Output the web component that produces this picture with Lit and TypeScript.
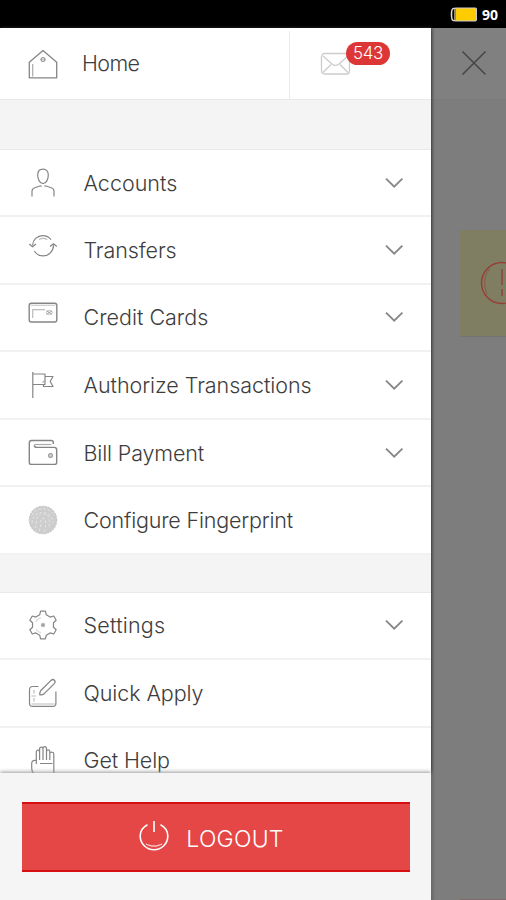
import { LitElement, html, css, svg } from "lit";
import { customElement } from "lit/decorators.js";
import { classMap } from "lit/directives/class-map.js";
import { styleMap } from "lit/directives/style-map.js";

// Outline of a six-toothed cog: each tooth is a flat tip between two inner corners.
const cog = (() => {
  const points: string[] = [];
  const at = (deg: number, r: number) => {
    const a = ((deg - 90) * Math.PI) / 180;
    points.push(`${(15 + r * Math.cos(a)).toFixed(2)} ${(15 + r * Math.sin(a)).toFixed(2)}`);
  };
  for (let tooth = 0; tooth < 6; tooth++) {
    const c = tooth * 60;
    at(c - 18, 10.7);
    at(c - 10, 14);
    at(c + 10, 14);
    at(c + 18, 10.7);
  }
  return `M${points.join("L")}Z`;
})();

const icons = {
  home: svg`<path d="M1.3 13.2 15 1.5 28.7 13.2V28.8H1.3Z" stroke-width="1.3"/><path d="M4.7 15v12.5" stroke="#aaa"/><circle cx="15" cy="10.5" r="1.9" stroke="#999"/><path d="M12 10.5h6" stroke="#aaa" stroke-width=".7"/>`,
  user: svg`<path d="M15 1.200c-3.600 0-5.300 2.300-5.300 5.800 0 4.300 2 8.600 5.300 8.600s5.300-4.300 5.300-8.600c0-3.500-1.700-5.800-5.300-5.800Z"/><path d="M4 28.500v-5.300c0-2 .9-2.900 2.800-3.500l5.700-1.900M26 28.500v-5.300c0-2-.9-2.900-2.800-3.500l-5.700-1.900M12.500 17.800l1 .7M17.500 17.800l-1 .7"/>`,
  transfer: svg`<path d="M4.500 14.500C4.800 8.700 9.200 4.600 14.800 4.600c3.500 0 6.300 1.500 8.200 4M6.300 20c2 3.200 5 4.900 8.700 4.900 5.800 0 10.300-4.500 10.500-10.700"/><path d="m1.300 13 3.200 2.800L8 13M22 15.500l3.500-2.700 3.300 2.700"/><path d="M11 8.500c2.700-1.400 6-1.300 8.200.2" stroke="#bbb"/>`,
  card: svg`<rect x="1.200" y="5.300" width="27.600" height="18.700" rx="2.200" stroke-width="1.400"/><path d="M3 7.300h24" stroke="#ccc"/><path d="M4.700 20v-8.300H17" stroke="#bbb"/><path d="m18.500 12.800 5.500 3.500m0-3.500-5.500 3.500" stroke="#999" stroke-width=".9"/><ellipse cx="21.300" cy="14.500" rx="3" ry="1.900" stroke="#aaa" stroke-width=".8"/>`,
  flag: svg`<path d="M4.800 2v26"/><path d="M4.800 4h12.200v10.500H4.800M17 6.500h8l-2.800 5 2.800 5h-9.500v-2"/><path d="M17 10.500l-2.500 2" stroke="#aaa"/>`,
  wallet: svg`<path d="M25.300 6V4.500c0-1.400-.8-2-2-2H3.500c-1.500 0-2.200.9-2.200 2.200v19.500c0 1.400.9 2.200 2.200 2.200h23c1.400 0 2.200-.8 2.200-2.200V12c0-1.700-1-2.600-2.600-2.600H8.500c-1.500 0-2.200-.8-2.200-2.100" stroke-width="1.400"/><path d="M6.300 6.500h17" stroke="#aaa"/><circle cx="22.500" cy="17.500" r="1.900" fill="#ddd" stroke="#999"/>`,
  finger: svg`<circle cx="15" cy="15" r="13.700" fill="#cdcdcd" stroke="#c8c8c8" stroke-dasharray="2 1"/><g stroke="#e8e8e8" stroke-width=".9" stroke-dasharray="2.500 2"><path d="M4 10C8 1.500 22 2 26 10M4 18C4 5 24 3 25 18M7 23c3-5-1-14 8-14 7 0 7 7 6 14M11 26c4-7 0-13 4-13s3 9 1 14"/></g>`,
  gear: svg`<path d=${cog}/><circle cx="15" cy="15" r="1.700" fill="#999" stroke="#bbb"/><path d="M8 12C9 9.500 11 8.200 13 7.700M8 19c1 2 3 3.500 5 3.900" stroke="#ddd"/>`,
  apply: svg`<path d="M10.500 8.500H4.700c-2.200 0-3.200 1.100-3.200 3.200v13.500c0 2.200 1 3.200 3.200 3.200h20c2.200 0 3.200-1 3.200-3.200V13.500"/><path d="m11.800 15.300c.2-1.300.5-2.200 1.300-3L23 2.400c2.500-2.200 5.400.8 3.300 3.200L16.500 15.400c-1.200 1.100-2.500 1.400-4.200 1.500-.5 0-.6-.5-.5-1.600Z" stroke-width="1.300"/><path d="M6 12v3.500M6 20v3.500M3.500 18h4.500M3.500 26h23" stroke="#bbb"/>`,
  hand: svg`<path d="M8.300 19V7.200c0-2.700 3.300-2.700 3.300 0V15M11.600 7V4.200c0-2.700 3.400-2.700 3.400 0V15M15 5.500V3.700c0-2.700 3.500-2.700 3.500 0V15M18.500 6.500c0-2.300 3.300-2.300 3.300 0V15M21.800 8.500c0-1.700 4-2 4 .5V30M8.300 15.500c-3.500-.5-4.600 1-4.600 3.200V23c0 3.500 1.600 5.800 4.400 8M12 18.500h12.500"/>`,
};
type IconName = keyof typeof icons;
interface Item { label: string; icon: IconName; expands: boolean; tracking: number; }

const banking: Item[] = [
  { label: "Accounts", icon: "user", expands: true, tracking: 0 },
  { label: "Transfers", icon: "transfer", expands: true, tracking: -0.1 },
  { label: "Credit Cards", icon: "card", expands: true, tracking: 0 },
  { label: "Authorize Transactions", icon: "flag", expands: true, tracking: -0.05 },
  { label: "Bill Payment", icon: "wallet", expands: true, tracking: -0.14 },
  { label: "Configure Fingerprint", icon: "finger", expands: false, tracking: -0.2 },
];
const support: Item[] = [
  { label: "Settings", icon: "gear", expands: true, tracking: 0.22 },
  { label: "Quick Apply", icon: "apply", expands: false, tracking: -0.08 },
  { label: "Get Help", icon: "hand", expands: false, tracking: -0.1 },
];

@customElement("app-root")
export class AppRoot extends LitElement {
  static styles = css`
    :host { display: flex; flex-direction: column; height: 900px; width: 506px; overflow: hidden; font-family: Inter, Roboto, "Liberation Sans", sans-serif; color: #3d3d3d; background: #7d7d7d; }
    * { box-sizing: border-box; }
    svg { display: block; fill: none; flex: none; }
    .status { height: 28px; flex: none; background: #000; display: flex; align-items: center; justify-content: flex-end; gap: 4px; padding: 1px 8px 0 0; color: #fff; font: 700 14px "Open Sans", sans-serif; }
    .body { display: flex; flex: 1; min-height: 0; }
    .drawer { width: 431px; flex: none; display: flex; flex-direction: column; background: #f4f4f4; box-shadow: 1px 0 3px #333; z-index: 1; }
    .head { height: 72px; flex: none; background: #fff; border-bottom: 1px solid #e9e9e9; display: flex; }
    .home { width: 290px; display: flex; align-items: center; padding-left: 28px; border-right: 1px solid #ebebeb; margin-top: 3px; padding-bottom: 3px; }
    .home .label { margin-left: 24px; letter-spacing: -0.6px; padding-bottom: 2px; }
    .mail { position: relative; padding: 24px 0 0 30px; }
    .badge { position: absolute; left: 56px; top: 14px; width: 44px; height: 23px; border-radius: 12px; background: #dd3636; color: #fff; font: 300 17px/22px Inter, sans-serif; letter-spacing: -0.3px; text-align: center; }
    .list { flex: 1; min-height: 0; overflow: hidden; }
    .group { border-top: 1px solid #e9e9e9; background: #fff; }
    .banking { margin-top: 49px; }
    .support { margin-top: 37px; }
    .row { height: 67.6px; display: flex; align-items: center; padding: 0 27px 0 28px; border-bottom: 2px solid #f1f1f1; }
    .row:first-child { height: 67px; }
    .label { font-weight: 300; font-size: 21.5px; line-height: 24px; white-space: nowrap; }
    .row .label { flex: 1; margin: 0 0 0 25.500px; }
    .icon { stroke: #858585; stroke-width: 1.2; stroke-linejoin: round; }
    .raised { margin-top: -8px; }
    .footer { height: 127px; flex: none; background: #f5f5f5; padding: 29px 21px 0 22px; box-shadow: 0 -1px 4px #999; }
    .logout { height: 70px; border: solid #d60f12; border-width: 2px 0; background: #e54646; color: #fff; display: flex; align-items: center; justify-content: center; gap: 16px; font-weight: 300; font-size: 23px; letter-spacing: 0.25px; padding: 4px 10px 0 0; }
    .logout svg { margin-top: -7px; }
    .page { flex: 1; display: flex; flex-direction: column; }
    .bar { height: 72px; display: flex; align-items: center; padding: 0 0 2px 29.500px; background: #808080; border-bottom: 1px solid #7b7b7b; }
    .alert { margin: 130px 0 0 29px; height: 107px; background: #7f7e62; border-bottom: 1px solid #747470; padding: 31px 0 0 20px; overflow: hidden; }
    .end { margin: auto 0 0 29px; height: 1px; background: #7f6a6c; }
  `;

  private row(item: Item) {
    return html`<div class="row">
      <svg class=${classMap({ icon: true, raised: item.icon === "transfer" || item.icon === "card" })} width="30" height="30" viewBox="0 0 30 30">${icons[item.icon]}</svg>
      <span class="label" style=${styleMap({ letterSpacing: `${item.tracking}px` })}>${item.label}</span>
      ${item.expands ? html`<svg width="20" height="12" viewBox="0 0 20 12" stroke="#888" stroke-width="1.900"><path d="m2 1.600 8.200 8 8.200-8"/></svg>` : ""}
    </div>`;
  }

  render() {
    return html`
      <div class="status">
        <svg width="28" height="15" viewBox="0 0 28 15"><path d="M5 1.500H3.500C2 1.500 1.500 4 1.500 7.500s.5 6 2 6h2" stroke="#ddd" stroke-width="1.500"/><rect x="4.500" y="1" width="22" height="13" rx="1" fill="#fc0" stroke="#ccc"/><path d="M5 2v11" stroke="#5c4900"/></svg>
        <span>90</span>
      </div>
      <div class="body">
        <nav class="drawer">
          <div class="head">
            <div class="home"><svg class="icon" width="30" height="30" viewBox="0 0 30 30">${icons.home}</svg><span class="label">Home</span></div>
            <div class="mail">
              <svg width="32" height="24" viewBox="0 0 32 24" stroke="#ccc" stroke-width="1.300"><rect x="1.500" y="1.500" width="28" height="20.500" rx="3"/><path d="m3 4 9 8c2.500 2 4.500 2 7 0l9-8M3 20.500l8-8M28 20.500l-8-8"/></svg>
              <span class="badge">543</span>
            </div>
          </div>
          <div class="list">
            <div class="group banking">${banking.map((i) => this.row(i))}</div>
            <div class="group support">${support.map((i) => this.row(i))}</div>
          </div>
          <div class="footer">
            <div class="logout">
              <svg width="32" height="32" viewBox="0 0 32 32" stroke="#fff" stroke-width="1.600"><path d="M9.500 4.700C5 7 2.200 11 2.200 16a13.800 13.800 0 0 0 27.600 0c0-5-2.800-9-7.300-11.300M16 1v11"/><path d="M8 24c2 1.300 4 1 5 2h6c1-1 3-.7 5-2" stroke-width="1"/></svg>
              <span>LOGOUT</span>
            </div>
          </div>
        </nav>
        <div class="page">
          <div class="bar"><svg width="26" height="26" viewBox="0 0 26 26" stroke="#444" stroke-width="1.500"><path d="m1.500 1.500 23 23m0-23-23 23"/></svg></div>
          <div class="alert"><svg width="44" height="44" viewBox="0 0 44 44" stroke="#963d36" stroke-width="1.400"><circle cx="22" cy="22" r="20.500"/><path d="M22 8v16M22 28v7"/><path d="M10 8C4 13 3 24 7 33" stroke-width=".6"/></svg></div>
          <div class="end"></div>
        </div>
      </div>`;
  }
}
